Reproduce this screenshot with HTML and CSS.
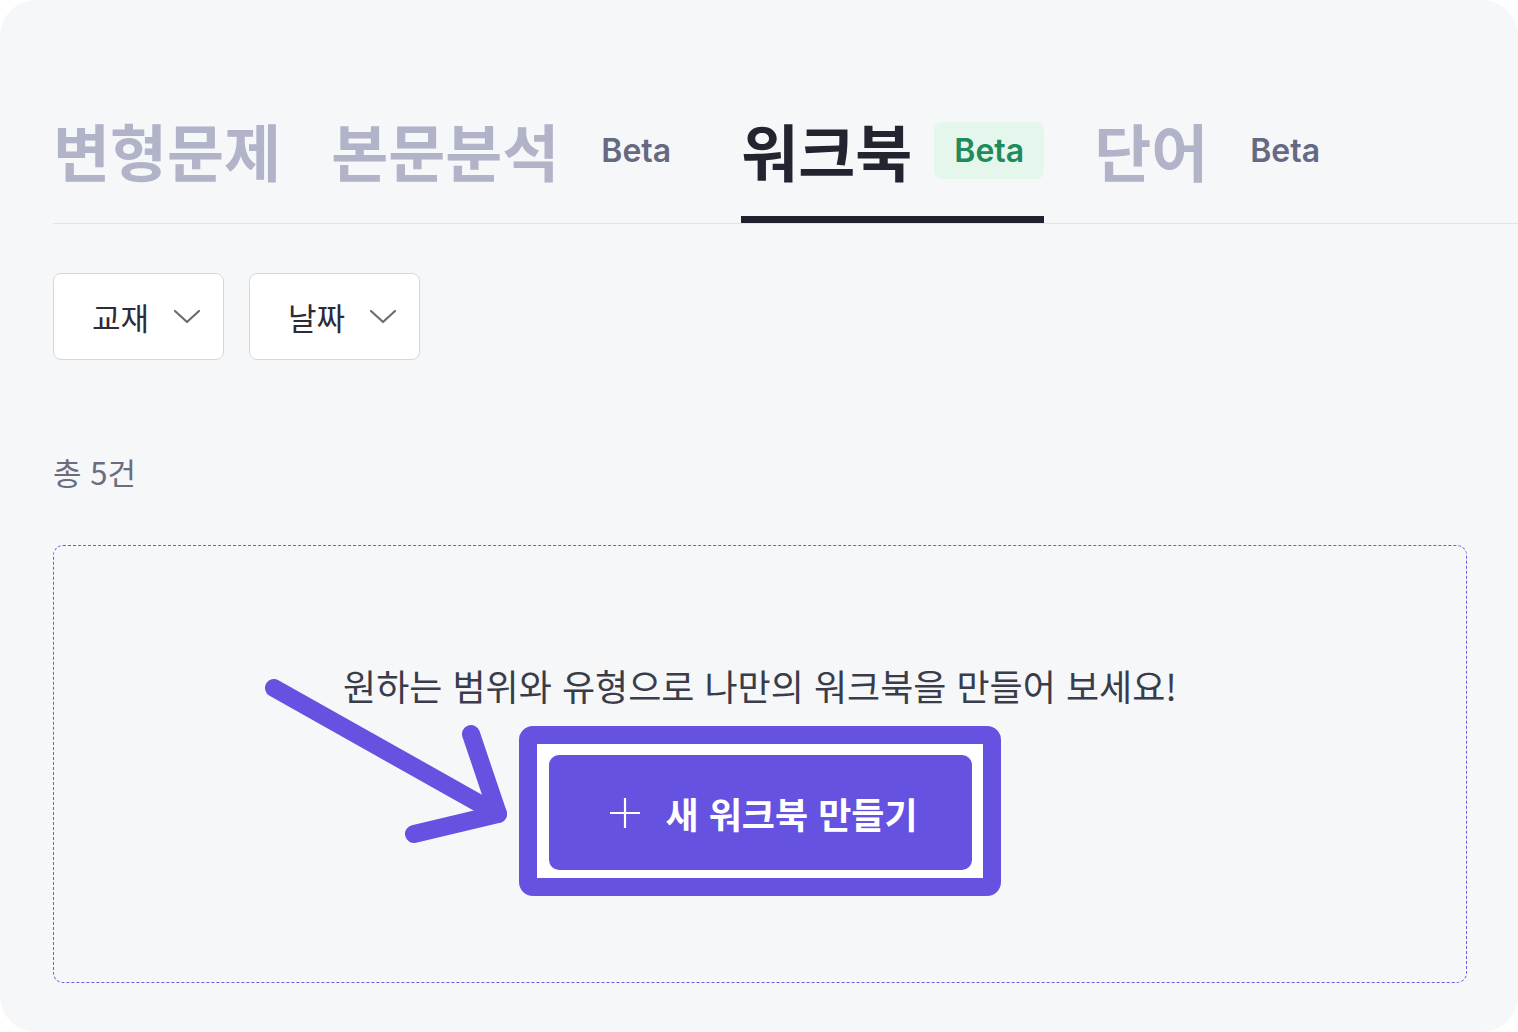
FILE: index.html
```html
<!DOCTYPE html>
<html lang="ko">

<head>
    <meta charset="UTF-8">
    <meta name="viewport" content="width=device-width, initial-scale=1.0">
    <title>워크북</title>
    <link rel="stylesheet" href="styles.css">
</head>

<body>
    <div class="panel">
        <!-- 탭 -->
        <nav class="tabs">
            <a href="#" class="tab">변형문제</a>
            <a href="#" class="tab">본문분석<span class="beta">Beta</span></a>
            <a href="#" class="tab active">워크북<span class="beta">Beta</span></a>
            <a href="#" class="tab">단어<span class="beta">Beta</span></a>
        </nav>

        <!-- 필터 -->
        <div class="filters">
            <button class="select">교재
                <svg width="28" height="16" viewBox="0 0 28 16"><path d="M2 2l12 11L26 2" fill="none" stroke="#6b6c75" stroke-width="2.2" stroke-linecap="round" stroke-linejoin="round"/></svg>
            </button>
            <button class="select">날짜
                <svg width="28" height="16" viewBox="0 0 28 16"><path d="M2 2l12 11L26 2" fill="none" stroke="#6b6c75" stroke-width="2.2" stroke-linecap="round" stroke-linejoin="round"/></svg>
            </button>
        </div>

        <p class="count">총 5건</p>

        <!-- 빈 목록 -->
        <section class="empty">
            <svg class="arrow" width="280" height="200" viewBox="0 0 280 200">
                <path d="M20 22L244 148" fill="none" stroke="#6652e1" stroke-width="18" stroke-linecap="round"/>
                <polyline points="217,68 244,148 160,168" fill="none" stroke="#6652e1" stroke-width="18" stroke-linecap="round" stroke-linejoin="round"/>
            </svg>
            <p class="msg">원하는 범위와 유형으로 나만의 워크북을 만들어 보세요!</p>
            <span class="mark">
                <button class="create">
                    <svg width="32" height="32" viewBox="0 0 32 32"><path d="M16 1v30M1 16h30" stroke="#fff" stroke-width="2.2"/></svg>
                    새 워크북 만들기
                </button>
            </span>
        </section>
    </div>
</body>

</html>
```

FILE: styles.css
```css
* {
    margin: 0;
    padding: 0;
    box-sizing: border-box;
}

html,
body {
    width: 100%;
    height: 100%;
    background: #fff;
}

body {
    font-family: Inter, "Noto Sans CJK KR", sans-serif;
    color: #2a2b38;
}

.panel {
    width: 1518px;
    height: 1032px;
    border-radius: 36px;
    background: #f6f7f9;
    padding: 119px 0 0 53px;
    overflow: hidden;
}

/* 탭 */
.tabs {
    display: flex;
    gap: 50px;
    border-bottom: 1px solid #e3e4e9;
}

.tab {
    display: flex;
    align-items: center;
    gap: 22px;
    height: 104px;
    padding-bottom: 35px;
    border-bottom: 7px solid transparent;
    font-family: "Noto Sans CJK KR", sans-serif;
    font-size: 62px;
    line-height: 62px;
    font-weight: 700;
    color: #b1b3c8;
    text-decoration: none;
}

.tab.active {
    color: #23242f;
    border-bottom-color: #1f2030;
}

.beta {
    display: inline-block;
    height: 57px;
    line-height: 57px;
    padding: 0 20px;
    border-radius: 8px;
    font-family: Inter, sans-serif;
    font-size: 32px;
    font-weight: 600;
    color: #666982;
}

.tab.active .beta {
    background: #e5f6ec;
    color: #1f8a5b;
}

/* 필터 */
.filters {
    display: flex;
    gap: 25px;
    margin-top: 49px;
}

.select {
    display: flex;
    align-items: center;
    justify-content: space-between;
    width: 171px;
    height: 87px;
    padding: 0 22px 0 38px;
    border: 1px solid #d6d7de;
    border-radius: 8px;
    background: #fff;
    font-family: "Noto Sans CJK KR", sans-serif;
    font-size: 31px;
    color: #2b2c38;
}

.count {
    margin-top: 91px;
    font-family: "Noto Sans CJK KR", sans-serif;
    font-size: 31px;
    line-height: 42px;
    color: #6b6d7e;
}

/* 빈 목록 */
.empty {
    position: relative;
    display: flex;
    flex-direction: column;
    align-items: center;
    justify-content: center;
    gap: 46px;
    width: 1414px;
    height: 438px;
    margin-top: 52px;
    padding-top: 3px;
    border: 1px dashed #6c5ce2;
    border-radius: 10px;
}

.arrow {
    position: absolute;
    left: 200px;
    top: 120px;
}

.msg {
    font-family: "Noto Sans CJK KR", sans-serif;
    font-size: 36px;
    line-height: 48px;
    color: #3a3c4a;
}

.mark {
    position: relative;
    display: inline-block;
}

.mark::before {
    content: "";
    position: absolute;
    top: -29px;
    bottom: -26px;
    left: -30px;
    right: -29px;
    border: 18px solid #6652e1;
    border-radius: 14px;
    background: #fff;
}

.create {
    position: relative;
    display: flex;
    align-items: center;
    gap: 25px;
    width: 423px;
    height: 115px;
    padding: 0 0 0 60px;
    border: none;
    border-radius: 10px;
    background: #6652e1;
    color: #fff;
    white-space: nowrap;
    font-family: "Noto Sans CJK KR", sans-serif;
    font-size: 36px;
    font-weight: 700;
}
```
